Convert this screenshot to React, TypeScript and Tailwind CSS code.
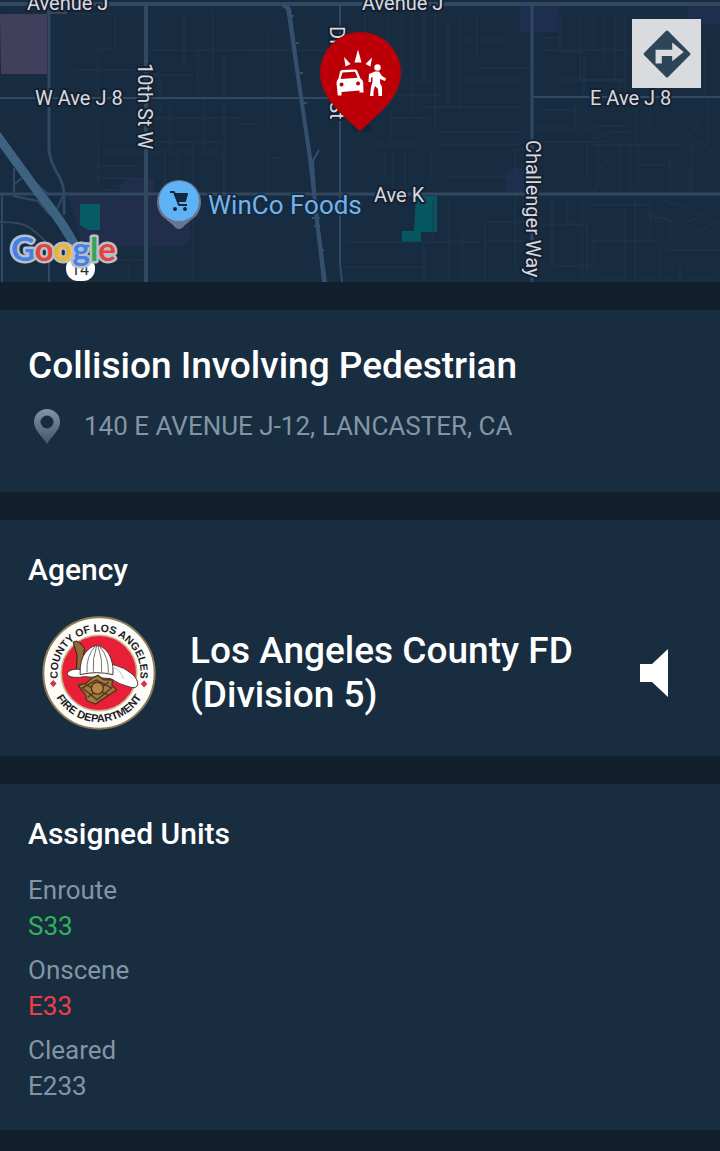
const UNIT_GROUPS = [
  { status: "Enroute", units: ["S33"], color: "text-[#2fb35c]" },
  { status: "Onscene", units: ["E33"], color: "text-[#ee3f47]" },
  { status: "Cleared", units: ["E233"], color: "text-[#8295a5]" },
];

// faint residential streets
const MINOR_STREETS = [
  "M75 14v0h40v35h-17v50M98 120v70M74 70h72M148 50h180M184 10v60M213 10v68M160 78v40M198 50v45M224 50v150M148 75h45M170 100v50M204 98v54M148 118h92M148 142h75",
  "M98 152h125v42M98 166h40M98 178h42M98 190h30M165 152v40M178 152v40M193 142v140M129 260v22M115 260h30M250 50h40M268 30v94M240 124h16M268 150v40M268 158h12",
  "M365 14v20M388 14v70M402 14v65M412 14v100M424 14v66M435 14v118M448 22v84M460 14v94M477 14v45M400 40h80M412 80h108M395 95h45M425 107h95M390 118h40M391 110v30M436 132h84M375 144h45M385 152v26M393 152v44M405 152v44M431 150v30M440 145h80M444 177h76",
  "M345 242h135M345 267h80M424 242v40M433 200v40M449 200v82M462 230v52M485 222h45M485 241h36M485 222v58M515 150v120M510 150h15M480 68h50M480 40h30",
  "M560 16v36h24v44M580 16v64h55M594 16v35M604 16v50M615 16v68M625 16v80M540 50h90M560 80h60v17M540 38h20M635 16v4M705 50v44M540 110h40M575 106v26M585 132l10-6h32M595 140l15-8h20M636 110v30M650 100v28M535 128h40M540 142h70M700 120l-15 20M708 100v40",
  "M587 144v36M598 144v40l-5 8M608 158l-10 12M620 144v50M630 142v52M638 142v40M588 145h92M688 155l12-14 18 18M692 142v50M702 160l-12 10v20M670 155v35M640 165h30M552 195v70M567 200v24h20v50M582 196v87M590 205h60v36M625 210v70M635 198v85M645 212l28 10 12-14-22-8M590 241h64M660 250v35M665 250h55M680 265v15M688 222l30-16M690 236l28-14M582 266h12v-30M650 218h20v22M540 225h40M555 266h25M600 280h118",
];

function MapView() {
  return (
    <svg
      viewBox="0 0 720 282"
      preserveAspectRatio="xMidYMid slice"
      role="img"
      aria-label="Incident map"
      className="block h-[282px] w-full bg-[#172b41]"
    >
      {/* land areas */}
      <path d="M0 14h67v-4h-20v64H1z" fill="#40405c" />
      <path d="M118 185l14-8 22 2v17h36v44l-8 7h-64l-38-6-5-25-8-22h55z" fill="#212e4b" />
      <path d="M520 5h38v27h-38zM688 4h32v20h-32zM507 170l12-3 5 3v25h-18z" fill="#1e2e4e" />
      <path d="M80 204h20v26H88l-8-5z" fill="#065b64" />
      <path d="M416 196h21v36h-16v10h-19v-11h12z" fill="#065761" />

      <g fill="none" stroke="#20364b" strokeWidth="1">
        {MINOR_STREETS.map((d) => (
          <path key={d} d={d} />
        ))}
      </g>

      {/* arterial roads */}
      <g fill="none" stroke="#304961">
        <path d="M0 4h720" strokeWidth="4" />
        <path d="M49 4v146q1 12 10 26 5 10 5 19v20" strokeWidth="3" />
        <path d="M146 4v278" strokeWidth="4" />
        <path d="M0 194h720" strokeWidth="3" />
        <path d="M0 98h340M532 97h188" strokeWidth="2" />
        <path d="M532 4v278" strokeWidth="3" />
        <path d="M340 4v260l2 18" strokeWidth="2" />
        <path d="M0 222q22 0 30 6 14 10 19 18v36M2 194v88" strokeWidth="2" />
        <path d="M14 168v24M15 184l7-6M13 196l25 5 12 14M30 178l18 16M64 194l-7 15" strokeWidth="2" />
      </g>
      <path d="M-4 134l42 58q30 36 44 68" fill="none" stroke="#3e6381" strokeWidth="9" />

      {/* railway */}
      <g fill="none" stroke="#34506e">
        <path d="M283 5l5 3 22 150 14 124" strokeWidth="4" />
        <path d="M290 8l18 140 18 134" strokeWidth="2" />
        <path d="M311 164l8-14M289 16h5M296 43h3M300 73h3M304 103h3M313 160l2 32M312 218h8M314 226h6M321 250h3" strokeWidth="2" />
      </g>

      {/* street names */}
      <g
        fill="#d5dae0"
        stroke="#17202f"
        strokeWidth="4"
        strokeLinejoin="round"
        paintOrder="stroke"
        fontFamily="Roboto, sans-serif"
        fontSize="20"
      >
        <text x="27" y="10">Avenue J</text>
        <text x="362" y="10">Avenue J</text>
        <text x="35" y="105">W Ave J 8</text>
        <text x="590" y="105">E Ave J 8</text>
        <text x="374" y="202">Ave K</text>
        <text transform="translate(138 63) rotate(90)">10th St W</text>
        <text transform="translate(330 26) rotate(90)">Division St</text>
        <text transform="translate(526 140) rotate(90)">Challenger Way</text>
      </g>

      {/* store marker */}
      <path d="M179 229q-3 0-6-4l-11-9a22 22 0 1 1 34 0l-11 9q-3 4-6 4z" fill="#6c7590" />
      <circle cx="179" cy="201" r="20" fill="#5eb3f6" />
      <g fill="none" stroke="#14263a" strokeWidth="2" strokeLinejoin="round">
        <path d="M170 192h4l5 13h8" />
        <path d="M175 194h12l-2 7h-7z" fill="#14263a" />
      </g>
      <circle cx="175" cy="209" r="2" fill="#14263a" />
      <circle cx="185" cy="209" r="2" fill="#14263a" />
      <text
        x="208"
        y="214"
        fill="#70b5ea"
        stroke="#17283e"
        strokeWidth="3"
        paintOrder="stroke"
        fontFamily="Roboto, sans-serif"
        fontSize="26"
      >
        WinCo Foods
      </text>

      {/* route shield */}
      <rect x="66" y="256" width="29" height="25" rx="12" fill="#fff" />
      <text x="80" y="275" textAnchor="middle" fill="#263238" fontFamily="Roboto, sans-serif" fontSize="16">
        14
      </text>

      <text
        x="11"
        y="261"
        stroke="#b9bec7"
        strokeWidth="5"
        strokeLinejoin="round"
        paintOrder="stroke"
        fontFamily="Lato, sans-serif"
        fontSize="33"
        fontWeight="700"
      >
        <tspan fill="#4380e8">G</tspan>
        <tspan fill="#e5423b">o</tspan>
        <tspan fill="#f2b61c">o</tspan>
        <tspan fill="#4380e8">g</tspan>
        <tspan fill="#35a45a">l</tspan>
        <tspan fill="#e5423b">e</tspan>
      </text>

      {/* incident pin */}
      <ellipse cx="362" cy="128" rx="10" ry="4" fill="#142538" />
      <path
        d="M360 131.500C350 120 320 101 320 73a40.500 41 0 0 1 81 0C401 101 370 120 360 131.500z"
        fill="#bd0007"
      />
      <g fill="#fff">
        <path d="M354.500 62.500L358 49.500l3.500 13zM344 57l6.500 7-5 2.500zM372 57.500l-6.500 6.500 5 2.500z" />
        <path
          fillRule="evenodd"
          d="M340 71.500q.5-1.500 2.500-1.500l12.500-.5q1.800 0 2.300 1.500l3.200 7.500q2.500 1.500 2.700 4l.3 10h-4v-2l-18 1.500v3.500h-3.700l-1.300-12.500q0-3 2-4.500zM342.500 72.500l-2 6.500 17-1.200-2.500-6zM341.500 82.500a2 2 0 1 0 .1 0zM358 81.500a2 2 0 1 0 .1 0z"
        />
        <circle cx="377.500" cy="67.500" r="3.200" />
        <path d="M369 74l6-2.500h4l3 4.500 4 2.500-1 2.500-5-2 0 4 2 4v9h-3.500l-.5-7-3-3-1.500 5.500v4.500h-3.500l1-9 1.500-5v-5.500l-1.500 1.500v4h-2.500z" />
      </g>
    </svg>
  );
}

function DirectionsIcon() {
  return (
    <svg viewBox="0 0 48 48" className="size-[50px]" aria-hidden="true">
      <path d="M24 3l21 21-21 21L3 24z" fill="#2d4558" stroke="#2d4558" strokeWidth="3" strokeLinejoin="round" />
      <path d="M13 33V20h16v-7l11 9-11 9v-5H19v7z" fill="#dadbdf" />
    </svg>
  );
}

function AddressPin() {
  return (
    <svg viewBox="0 0 26 35" className="h-[35px] w-[26px] shrink-0" aria-hidden="true">
      <defs>
        <linearGradient id="pin-fade" x1="0" y1="0" x2="0" y2="1">
          <stop offset="0" stopColor="#8295a5" />
          <stop offset="1" stopColor="#40566a" />
        </linearGradient>
      </defs>
      <path
        fill="url(#pin-fade)"
        fillRule="evenodd"
        d="M13 0a13 13 0 0 1 13 13c0 8-8 14-13 22C8 27 0 21 0 13A13 13 0 0 1 13 0zm0 6.500a6.500 6.500 0 1 0 0 13 6.500 6.500 0 0 0 0-13z"
      />
    </svg>
  );
}

function AgencySeal() {
  return (
    <svg
      viewBox="38 29 344 344"
      role="img"
      aria-label="County of Los Angeles Fire Department"
      className="size-[114px] shrink-0"
    >
      <defs>
        <path id="seal-top" d="M86 217a125 125 0 1 1 248 0" />
        <path id="seal-bottom" d="M62 201a148 148 0 0 0 296 0" />
      </defs>
      <circle cx="210" cy="201" r="168" fill="#fdfcf8" stroke="#8d7c55" strokeWidth="6" />
      <circle cx="210" cy="201" r="114" fill="#e91f38" stroke="#c9b68a" strokeWidth="5" />
      <g fill="#20201f" fontFamily="'Liberation Sans', sans-serif" fontWeight="700" textAnchor="middle">
        <text fontSize="32">
          <textPath href="#seal-top" startOffset="50%">COUNTY OF LOS ANGELES</textPath>
        </text>
        <text fontSize="33">
          <textPath href="#seal-bottom" startOffset="50%">FIRE DEPARTMENT</textPath>
        </text>
      </g>
      <path d="M72 222l10 11-10 11-10-11zM346 223l10 11-10 11-10-11z" fill="#d8334b" />

      {/* helmet */}
      <path d="M132 108q10-8 20 2l14 16-10 76-14-4 2-50z" fill="#8f6c3c" stroke="#2b2018" strokeWidth="3" />
      <path
        d="M116 198q14-11 37-8l101-14q34 8 56 28 18 17 17 32-3 12-22 8-34-8-60-26l-78-6q-36 6-50-3-6-6-1-11z"
        fill="#fff"
        stroke="#4a3428"
        strokeWidth="3"
      />
      <path d="M153 206q-2-46 18-69 14-17 30-19 22 0 38 24 16 28 13 64-50-12-99 0z" fill="#fff" stroke="#4a3428" strokeWidth="3" />
      <path d="M200 119q-30 32-26 80M203 119q-14 40-10 78M207 119q14 40 11 79M212 121q29 34 26 80" fill="none" stroke="#807269" strokeWidth="3" />
      <path d="M250 182q28 12 34 37" fill="none" stroke="#c8c0b8" strokeWidth="3" />

      {/* shield */}
      <path
        d="M207 208l18 14 26-1-2 17 14 14-22 15-42 28-26-11-4-18-22-28 24-6 18-16z"
        fill="#a07a42"
        stroke="#4e341a"
        strokeWidth="4"
        strokeLinejoin="round"
      />
      <path d="M160 246l42-24 46 24-44 36zM169 236l69 32M240 228l-64 46" fill="none" stroke="#4e341a" strokeWidth="4" />
      <circle cx="205" cy="247" r="18" fill="#b98543" stroke="#4e341a" strokeWidth="4" />
    </svg>
  );
}

export default function App() {
  return (
    <div className="min-h-screen bg-[#12202d] font-['Roboto',sans-serif] text-white">
      <header className="relative">
        <MapView />
        <button
          type="button"
          aria-label="Directions"
          className="absolute top-[19px] right-[19px] flex size-[69px] items-center justify-center bg-[#dadbdf]"
        >
          <DirectionsIcon />
        </button>
      </header>

      <main className="flex flex-col gap-7 py-7">
        <section className="bg-[#182d3f] px-7 pt-[33px] pb-12">
          <h1 className="text-[37px] leading-[46px] font-medium">Collision Involving Pedestrian</h1>
          <div className="mt-5 flex items-center gap-6 pl-[6px]">
            <AddressPin />
            <p className="text-[26px] leading-[35px] text-[#8295a5]">140 E AVENUE J-12, LANCASTER, CA</p>
          </div>
        </section>

        <section className="bg-[#182d3f] px-7 pt-8 pb-[26px]">
          <h2 className="text-[30px] leading-9 font-medium">Agency</h2>
          <div className="mt-7 flex items-center pl-[14px]">
            <AgencySeal />
            <p className="ml-[34px] w-[400px] text-[37px] leading-11 font-medium">Los Angeles County FD (Division 5)</p>
            <button type="button" aria-label="Play agency audio" className="mr-6 ml-auto">
              <svg viewBox="0 0 28 48" className="h-12 w-7" aria-hidden="true">
                <path d="M0 15h12L28 0v48L12 33H0z" fill="#fff" />
              </svg>
            </button>
          </div>
        </section>

        <section className="bg-[#182d3f] px-7 pt-8 pb-[26px]">
          <h2 className="text-[30px] leading-9 font-medium">Assigned Units</h2>
          <dl className="mt-5 flex flex-col gap-2 text-[26px] leading-9">
            {UNIT_GROUPS.map((group) => (
              <div key={group.status}>
                <dt className="text-[#8295a5]">{group.status}</dt>
                {group.units.map((unit) => (
                  <dd key={unit} className={group.color}>
                    {unit}
                  </dd>
                ))}
              </div>
            ))}
          </dl>
        </section>
      </main>
    </div>
  );
}
